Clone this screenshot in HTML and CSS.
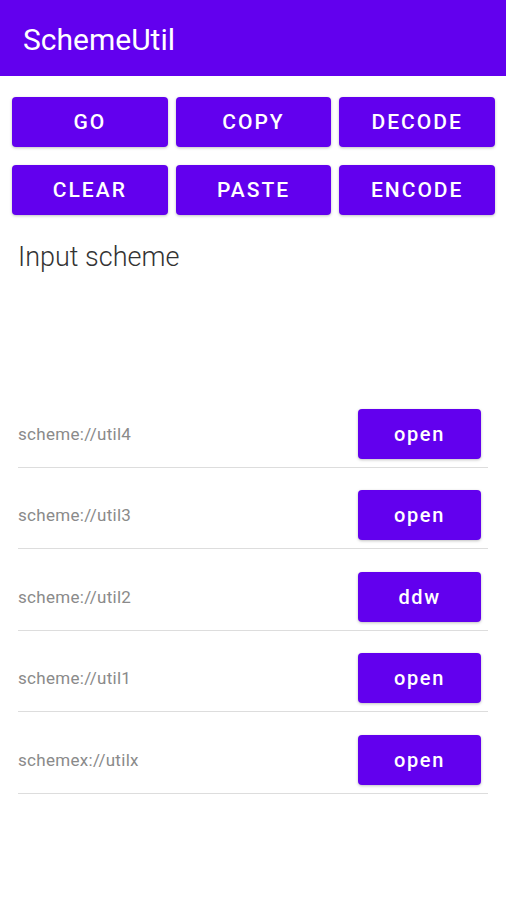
FILE: index.html
```html
<!DOCTYPE html>
<html lang="en">
<head>
  <meta charset="UTF-8">
  <title>SchemeUtil</title>
  <link rel="stylesheet" href="styles.css">
</head>
<body>
  <header class="appbar">SchemeUtil</header>

  <div class="actions">
    <button class="btn">GO</button>
    <button class="btn">COPY</button>
    <button class="btn">DECODE</button>
    <button class="btn">CLEAR</button>
    <button class="btn">PASTE</button>
    <button class="btn">ENCODE</button>
  </div>

  <div class="input">Input scheme</div>

  <ul class="list">
    <li class="row"><span>scheme://util4</span><button class="btn small">open</button></li>
    <li class="row"><span>scheme://util3</span><button class="btn small">open</button></li>
    <li class="row"><span>scheme://util2</span><button class="btn small">ddw</button></li>
    <li class="row"><span>scheme://util1</span><button class="btn small">open</button></li>
    <li class="row"><span>schemex://utilx</span><button class="btn small">open</button></li>
  </ul>
</body>
</html>
```

FILE: styles.css
```css
body{
  margin:0;
  font-family: Roboto, "Noto Sans", sans-serif;
  background:#fff;
}
.appbar{
  height:76px;
  background:#6200ee;
  color:#fff;
  font-size:30px;
  line-height:80px;
  padding-left:23px;
  box-sizing:border-box;
}
.actions{
  display:grid;
  grid-template-columns:repeat(3,1fr);
  column-gap:8px;
  row-gap:18px;
  padding:21px 11px 0 12px;
}
.btn{
  height:50px;
  border:0;
  border-radius:4px;
  background:#6200ee;
  color:#fff;
  font-family: Roboto, sans-serif;
  font-weight:500;
  font-size:21px;
  letter-spacing:2px;
  box-shadow:0 1px 3px rgba(0,0,0,.25);
  padding:0;
}
.input{
  margin:26px 0 0 18px;
  height:145px;
  font-size:27px;
  font-weight:300;
  color:#333;
}
.list{
  list-style:none;
  margin:0;
  padding:0 18px;
}
.row{
  display:flex;
  align-items:center;
  justify-content:space-between;
  padding:22.5px 7px 8px 0;
  border-bottom:1px solid #ddd;
}
.row span{
  font-size:17px;
  letter-spacing:.3px;
  color:#8a8a8a;
}
.btn.small{
  width:123px;
  font-size:20px;
  letter-spacing:1.6px;
}
```
